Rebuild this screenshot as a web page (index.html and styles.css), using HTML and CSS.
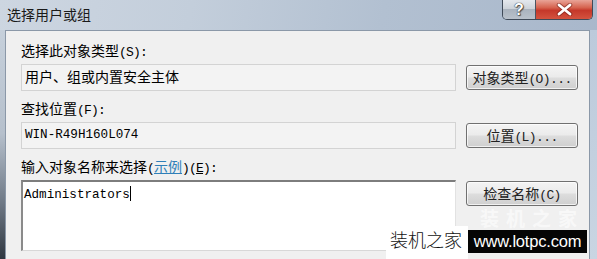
FILE: index.html
```html
<!DOCTYPE html>
<html>
<head>
<meta charset="utf-8">
<link rel="stylesheet" href="styles.css">
</head>
<body>
<div class="window">
  <div class="titlebar">
    <div class="title">选择用户或组</div>
    <div class="caption">
      <div class="cbtn help">?</div>
      <div class="cbtn close">
        <svg width="17" height="13" viewBox="0 0 17 13">
          <path d="M3 2 L14 11 M14 2 L3 11" stroke="#6b1a12" stroke-width="4.6" stroke-linecap="round" fill="none" opacity="0.55"/>
          <path d="M3 2 L14 11 M14 2 L3 11" stroke="#ffffff" stroke-width="2.8" stroke-linecap="round" fill="none"/>
        </svg>
      </div>
    </div>
  </div>
  <div class="frame">
    <div class="client">
      <div class="section">
        <div class="label">选择此对象类型<span class="hw">(S):</span></div>
        <div class="row">
          <div class="field">用户、组或内置安全主体</div>
          <div class="btn">对象类型<span class="hw">(O)...</span></div>
        </div>
      </div>
      <div class="section">
        <div class="label">查找位置<span class="hw">(F):</span></div>
        <div class="row">
          <div class="field mono">WIN-R49H160L074</div>
          <div class="btn">位置<span class="hw">(L)...</span></div>
        </div>
      </div>
      <div class="section">
        <div class="label">输入对象名称来选择<span class="hw">(</span><span class="link">示例</span><span class="hw">)(<u>E</u>):</span></div>
        <div class="row top">
          <div class="textarea mono">Administrators<span class="caret"></span></div>
          <div class="btn check">检查名称<span class="hw">(C)</span></div>
        </div>
      </div>
    </div>
  </div>
  <div class="ghost">装机之家</div>
  <div class="wm-cn">装机之家</div>
  <div class="wm-url">www.lotpc.com</div>
</div>
</body>
</html>
```

FILE: styles.css
```css
html, body {
  margin: 0;
  padding: 0;
  background: #c4cfdc;
}
.window {
  position: relative;
  width: 597px;
  height: 259px;
  overflow: hidden;
  display: flex;
  flex-direction: column;
  font-family: "Noto Sans CJK SC", "Liberation Sans", sans-serif;
  background: linear-gradient(100deg, #cdd6e1 0%, #c3cedb 30%, #b2c0d1 60%, #a7b6ca 100%);
}
.titlebar {
  height: 30px;
  flex: none;
  display: flex;
  justify-content: space-between;
  align-items: flex-start;
}
.title {
  padding-left: 7px;
  padding-top: 5px;
  font-size: 14px;
  line-height: 18px;
  color: #1a1a1a;
}
.caption {
  display: flex;
  margin-right: 4px;
  border: 1px solid #3f4a58;
  border-top: none;
  border-radius: 0 0 5px 5px;
  overflow: hidden;
  height: 19px;
}
.cbtn {
  height: 19px;
  display: flex;
  align-items: center;
  justify-content: center;
}
.help {
  width: 32px;
  background: linear-gradient(#e4e8ed 0%, #cdd3da 45%, #aab3be 50%, #b9c1cb 100%);
  border-right: 1px solid #4b5461;
  color: #fff;
  font-family: "Liberation Sans", sans-serif;
  font-weight: bold;
  font-size: 16px;
  text-shadow: 0 0 1px #333, 0 0 1px #333, 1px 1px 1px #555;
}
.close {
  width: 56px;
  background: linear-gradient(#e9a497 0%, #d6634f 40%, #c5382a 55%, #d4533f 100%);
}
.frame {
  flex: 1;
  display: flex;
  padding: 0 7px 0 5px;
  background:
    linear-gradient(#c6d0db 0%, #b6c0cc 45%, #6f7986 75%, #2e363f 100%) left top / 5px 100% no-repeat,
    linear-gradient(#bccadb, #c9d5e2) right top / 7px 100% no-repeat;
}
.client {
  flex: 1;
  background: #f0f0f0;
  border: 1px solid #8b98a8;
  border-bottom: none;
  padding: 11px 11px 0 15px;
}
.section {
  display: flex;
  flex-direction: column;
}
.label {
  font-size: 14px;
  line-height: 16px;
  height: 16px;
  color: #000;
  margin-bottom: 6px;
}
.hw {
  font-family: "Liberation Mono", monospace;
  font-size: 13px;
  letter-spacing: -0.8px;
}
.btn .hw {
  letter-spacing: -0.6px;
}
.link {
  color: #2f7fb8;
  text-decoration: underline;
}
.row {
  display: grid;
  grid-template-columns: 435px 112px;
  column-gap: 10px;
  align-items: center;
  margin-bottom: 9px;
}
.row.top {
  align-items: start;
}
.field {
  box-sizing: border-box;
  height: 27px;
  border: 1px solid #d3d3d3;
  background: #f3f3f3;
  padding: 3px 0 0 3px;
  font-size: 14px;
  line-height: 17px;
  color: #000;
}
.mono {
  font-family: "Liberation Mono", monospace;
  font-size: 12.6px;
}
.field.mono {
  padding-top: 4px;
}
.btn {
  box-sizing: border-box;
  height: 25px;
  border: 1px solid #707070;
  border-radius: 3px;
  background: linear-gradient(#f4f4f4 0%, #ebebeb 48%, #dddddd 52%, #cfcfcf 100%);
  box-shadow: inset 0 0 0 1px rgba(255, 255, 255, 0.7);
  font-size: 14px;
  line-height: 22px;
  text-align: center;
  color: #222;
  white-space: nowrap;
}
.btn.check {
  margin-top: 1px;
}
.textarea {
  box-sizing: border-box;
  height: 71px;
  background: #fff;
  border-top: 2px solid #7d7d7d;
  border-left: 2px solid #8a8a8a;
  border-right: 1px solid #e2e2e2;
  border-bottom: 1px solid #d8d8d8;
  padding: 4px 0 0 1px;
  line-height: 17px;
  color: #000;
}
.caret {
  display: inline-block;
  width: 1px;
  height: 15px;
  background: #000;
  vertical-align: -3px;
}
.ghost {
  position: absolute;
  left: 480px;
  top: 208px;
  font-size: 19px;
  font-weight: bold;
  letter-spacing: 7px;
  color: rgba(255, 255, 255, 0.6);
  line-height: 19px;
  height: 19px;
}
.wm-cn {
  position: absolute;
  left: 386px;
  top: 226px;
  width: 82px;
  height: 33px;
  background: #fff;
  font-size: 18px;
  line-height: 26px;
  padding-left: 4px;
  box-sizing: border-box;
  font-weight: 300;
  color: #111;
}
.wm-url {
  position: absolute;
  left: 468px;
  top: 230px;
  width: 119px;
  height: 23px;
  background: #050505;
  color: #fff;
  font-family: "Liberation Sans", sans-serif;
  font-size: 16.5px;
  line-height: 23px;
  text-align: center;
  letter-spacing: -0.2px;
}
```
